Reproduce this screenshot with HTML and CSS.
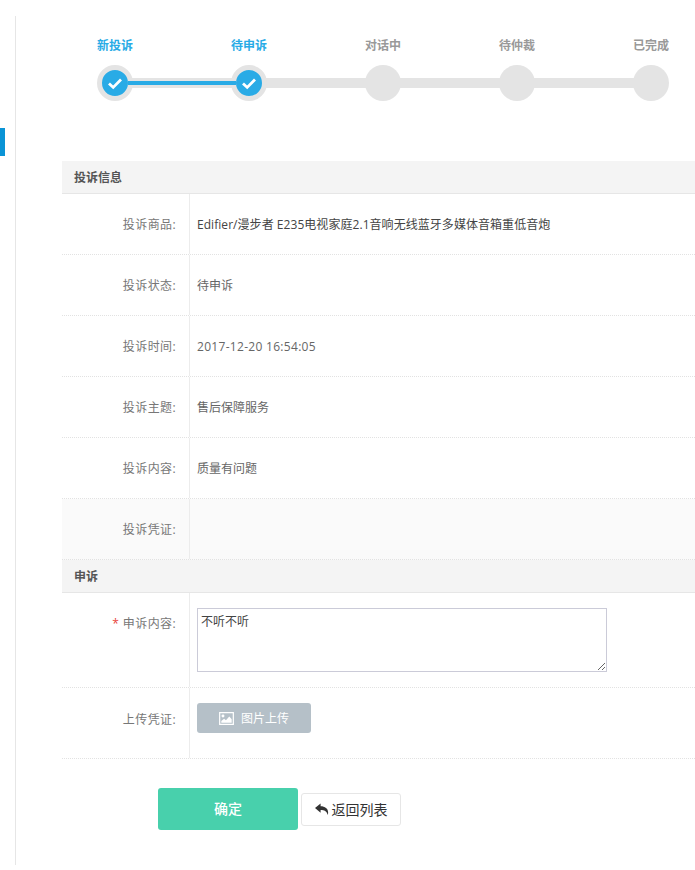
FILE: index.html
```html
<!DOCTYPE html>
<html lang="zh-CN">
<head>
  <meta charset="UTF-8" />
  <title>投诉详情</title>
  <link rel="stylesheet" href="styles.css">
</head>
<body>
  <div class="side-mark"></div>

  <div class="main">
    <!-- 进度条 -->
    <div class="steps">
      <div class="step done">
        <span class="step-name">新投诉</span>
        <span class="step-dot"><svg viewBox="0 0 16 16"><path d="M2 8.400 6.200 12.400 14 4.600" /></svg></span>
      </div>
      <div class="step done">
        <span class="step-name">待申诉</span>
        <span class="step-dot"><svg viewBox="0 0 16 16"><path d="M2 8.400 6.200 12.400 14 4.600" /></svg></span>
      </div>
      <div class="step">
        <span class="step-name">对话中</span>
        <span class="step-dot"></span>
      </div>
      <div class="step">
        <span class="step-name">待仲裁</span>
        <span class="step-dot"></span>
      </div>
      <div class="step">
        <span class="step-name">已完成</span>
        <span class="step-dot"></span>
      </div>
    </div>

    <div class="info">
      <div class="section-title">投诉信息</div>
      <div class="row">
        <div class="label">投诉商品:</div>
        <div class="value dark">Edifier/漫步者 E235电视家庭2.1音响无线蓝牙多媒体音箱重低音炮</div>
      </div>
      <div class="row">
        <div class="label">投诉状态:</div>
        <div class="value">待申诉</div>
      </div>
      <div class="row">
        <div class="label">投诉时间:</div>
        <div class="value date">2017-12-20 16:54:05</div>
      </div>
      <div class="row">
        <div class="label">投诉主题:</div>
        <div class="value">售后保障服务</div>
      </div>
      <div class="row">
        <div class="label">投诉内容:</div>
        <div class="value">质量有问题</div>
      </div>
      <div class="row grey">
        <div class="label">投诉凭证:</div>
        <div class="value"></div>
      </div>

      <div class="section-title">申诉</div>
      <div class="row row-text">
        <div class="label"><em>*</em> 申诉内容:</div>
        <div class="value"><textarea class="input-text">不听不听</textarea></div>
      </div>
      <div class="row row-upload">
        <div class="label">上传凭证:</div>
        <div class="value">
          <a href="#" class="btn-upload">
            <svg viewBox="0 0 16 14"><path fill-rule="evenodd" d="M0 0h16v14H0zM1.300 1.300v11.400h13.400V1.300z" /><circle cx="4.200" cy="4.200" r="1.600" /><path d="M2.400 11.600V9.800l3-2.600 2 1.700 3.600-4 2.600 3v3.700z" /></svg>
            图片上传
          </a>
        </div>
      </div>
    </div>

    <div class="actions">
      <a href="#" class="btn-ok">确定</a>
      <a href="#" class="btn-back">
        <svg viewBox="0 0 15 13"><path d="M6 0 0 5l6 5V7c4 0 6.600 1 7.700 5.400C15.300 6.400 11.500 3 6 3z" /></svg>
        返回列表
      </a>
    </div>
  </div>
</body>
</html>
```

FILE: styles.css
```css
* {
  box-sizing: border-box;
  margin: 0;
  padding: 0;
}

html {
  overflow: hidden;
}

body {
  font-family: 'Open Sans', 'Noto Sans CJK SC', sans-serif;
  font-size: 12px;
  color: #666;
  background: #fff;
  height: 870px;
  padding: 16px 0 5px 15px;
}

a {
  text-decoration: none;
}

.side-mark {
  position: absolute;
  top: 128px;
  left: 0;
  width: 5px;
  height: 28px;
  background: #0a94d6;
}

.main {
  height: 849px;
  border-left: 1px solid #e6e6e6;
  padding-left: 46px;
}

/* 进度条 */
.steps {
  position: relative;
  display: flex;
  gap: 98px;
  margin-left: 35px;
  padding-top: 21px;
  height: 145px;
}

.steps::before {
  content: '';
  position: absolute;
  top: 62px;
  left: 18px;
  width: 536px;
  height: 10px;
  background: #e4e4e4;
}

.steps::after {
  content: '';
  position: absolute;
  z-index: 2;
  top: 65px;
  left: 31px;
  width: 108px;
  height: 4px;
  background: #29abe6;
}

.step {
  position: relative;
  z-index: 1;
  width: 36px;
  display: flex;
  flex-direction: column;
  align-items: center;
}

.step-name {
  font-weight: bold;
  color: #999;
  line-height: 17px;
  white-space: nowrap;
  margin-bottom: 11px;
}

.step.done .step-name {
  color: #29abe6;
}

.step-dot {
  width: 36px;
  height: 36px;
  border-radius: 50%;
  background: #e4e4e4;
  display: flex;
  align-items: center;
  justify-content: center;
}

.step.done .step-dot {
  border: 5px solid #e4e4e4;
  background: #29abe6;
}

.step-dot svg {
  width: 16px;
  height: 16px;
  fill: none;
  stroke: #fff;
  stroke-width: 2.8;
}

/* 信息表 */
.section-title {
  height: 33px;
  line-height: 34px;
  padding-left: 12px;
  background: #f4f4f4;
  border-bottom: 1px solid #e6e6e6;
  font-weight: bold;
  color: #555;
}

.row {
  display: flex;
  height: 61px;
  border-bottom: 1px dotted #e2e2e2;
}

.row.grey {
  background: #fafafa;
}

.row-text {
  height: 95px;
}

.row-upload {
  height: 71px;
}

.label {
  width: 128px;
  flex-shrink: 0;
  border-right: 1px solid #ececec;
  padding: 22px 13px 0 0;
  line-height: 17px;
  letter-spacing: 0.4px;
  text-align: right;
  color: #777;
}

.label em {
  font-style: normal;
  color: #e8433c;
}

.value {
  flex: 1;
  padding: 22px 0 0 7px;
  line-height: 17px;
}

.value.dark {
  color: #444;
  letter-spacing: 0.05px;
}

.value.date {
  letter-spacing: 0.3px;
}

.row-text .value {
  padding-top: 15px;
}

.input-text {
  display: block;
  width: 410px;
  height: 64px;
  border: 1px solid #cbcbd8;
  padding: 4px 3px;
  font-family: inherit;
  font-size: 12px;
  line-height: 17px;
  color: #444;
  outline: none;
}

.row-upload .label {
  padding-top: 23px;
}

.row-upload .value {
  padding-top: 15px;
}

.btn-upload {
  display: flex;
  align-items: center;
  justify-content: center;
  gap: 7px;
  width: 114px;
  height: 30px;
  border-radius: 3px;
  background: #b5c0c8;
  color: #fff;
}

.btn-upload svg {
  width: 15px;
  height: 13px;
  fill: #fff;
}

/* 底部按钮 */
.actions {
  display: flex;
  align-items: center;
  gap: 3px;
  margin: 29px 0 0 96px;
}

.btn-ok {
  width: 140px;
  height: 42px;
  line-height: 42px;
  text-align: center;
  border-radius: 3px;
  background: #48d0ac;
  color: #fff;
  font-size: 14px;
  font-weight: 500;
}

.btn-back {
  display: flex;
  align-items: center;
  justify-content: center;
  gap: 3px;
  width: 100px;
  height: 33px;
  border: 1px solid #e6e6e6;
  border-radius: 3px;
  background: #fff;
  color: #333;
  font-size: 14px;
}

.btn-back svg {
  width: 14px;
  height: 13px;
  fill: #333;
}
```
